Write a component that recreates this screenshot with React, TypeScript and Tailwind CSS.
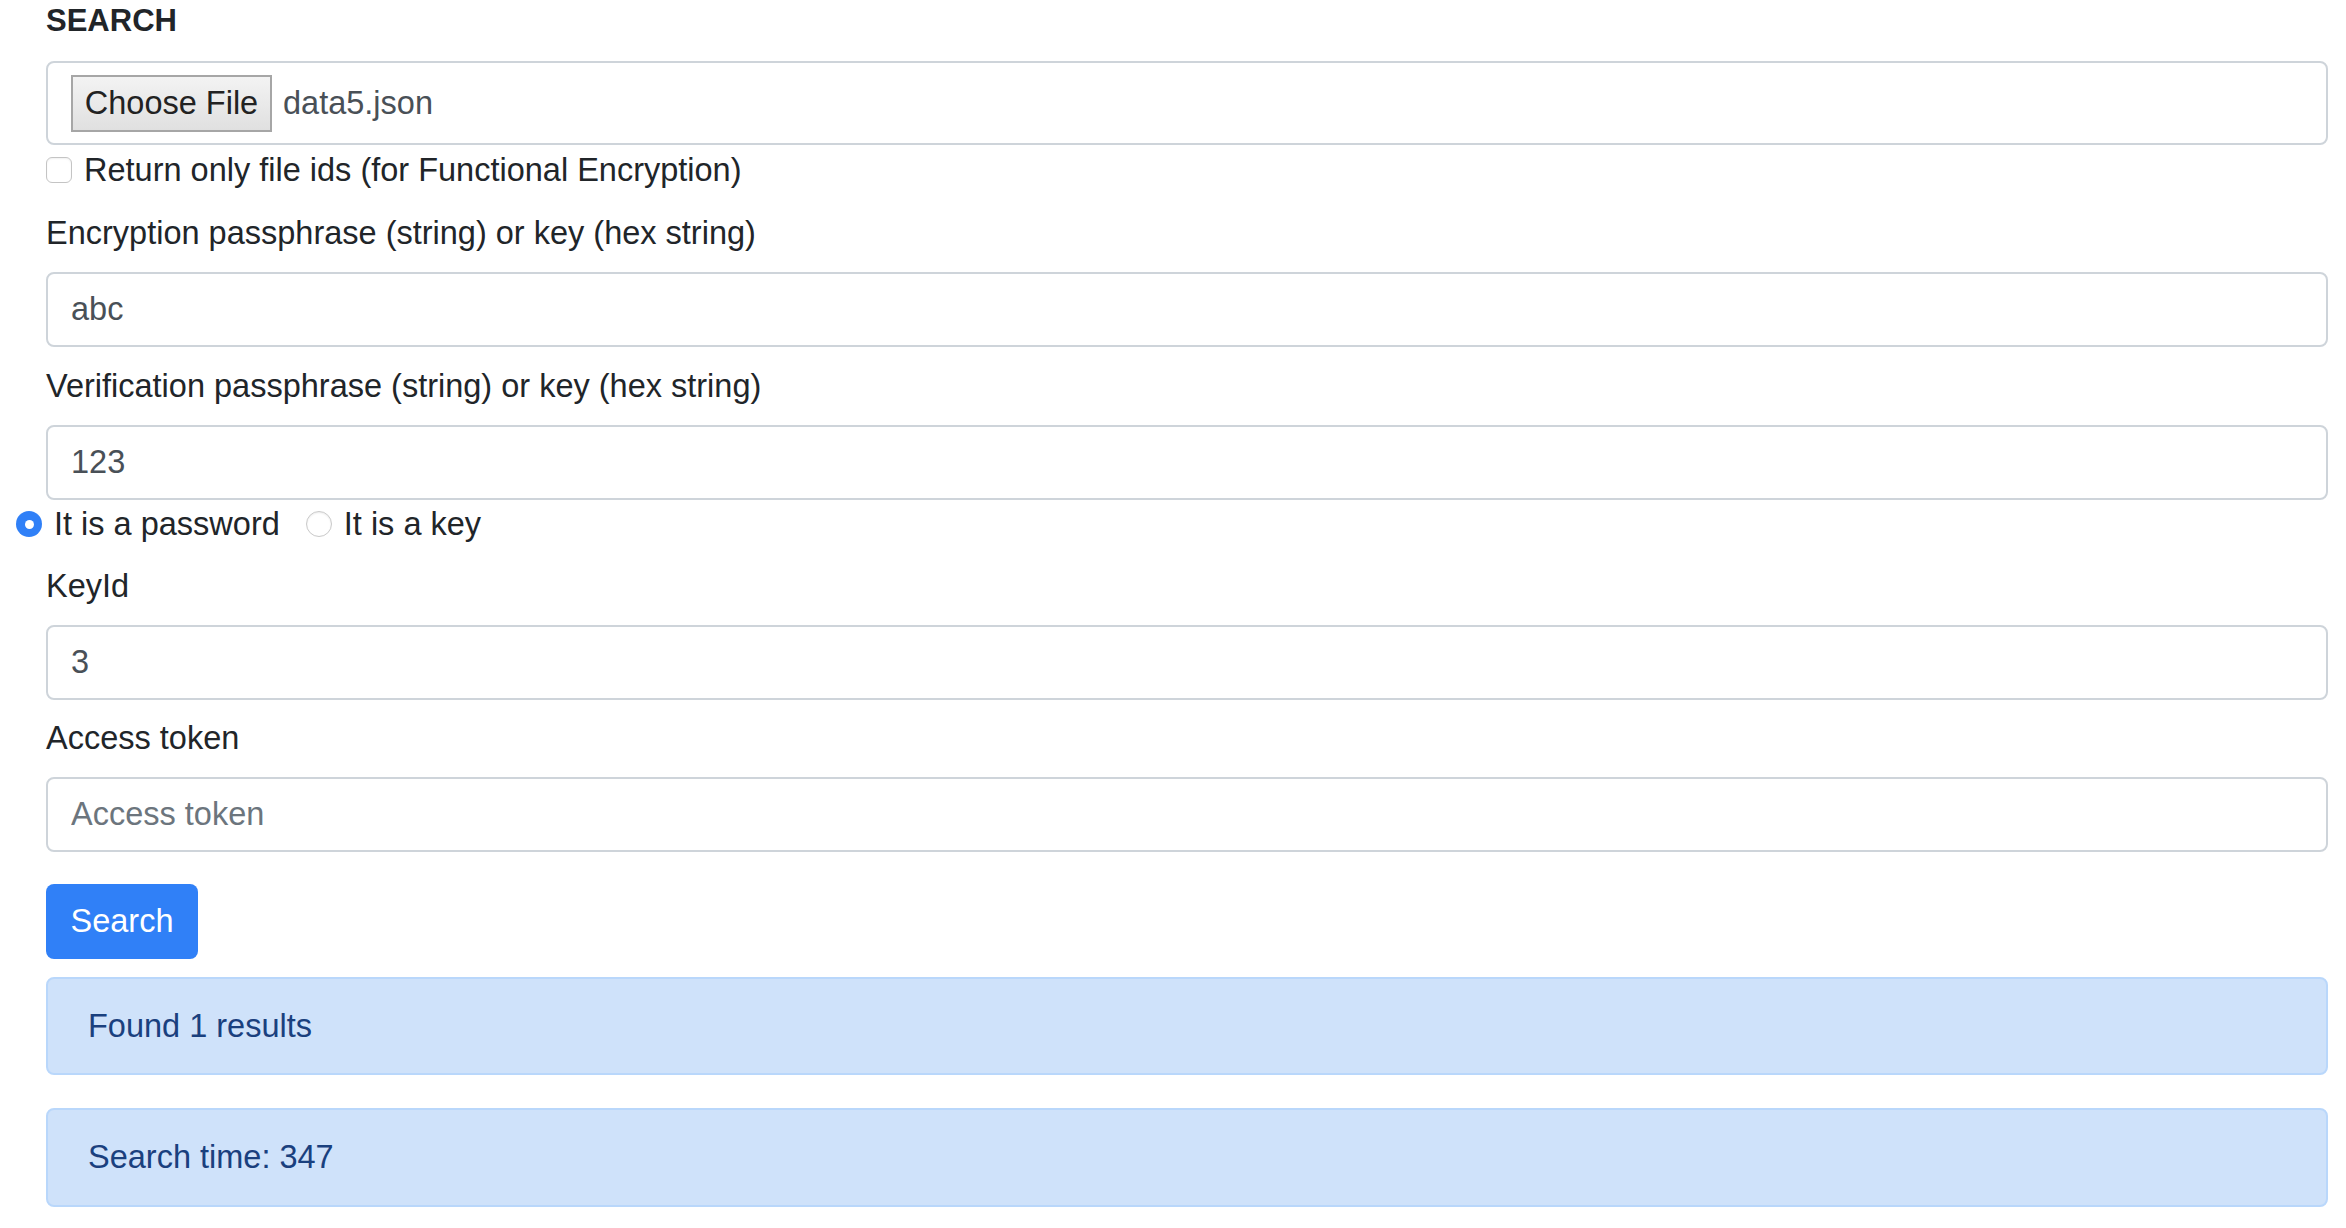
import React, { useState } from 'react';

const font = { fontFamily: '"Liberation Sans", Arial, sans-serif' };

function Field({ label, value, placeholder }: { label: string; value?: string; placeholder?: string }) {
  return (
    <div>
      <label className="block mt-[15px] h-[48px] leading-[48px] text-[32.5px] text-[#212529]">{label}</label>
      <input
        type="text"
        readOnly
        value={value ?? ''}
        placeholder={placeholder}
        className="mt-[15px] block w-full h-[75px] px-[23px] border-2 border-[#ced4da] rounded-[8px] bg-white text-[32.5px] text-[#495057] placeholder:text-[#6c757d] outline-none"
      />
    </div>
  );
}

function Radio({ checked, label, onClick }: { checked: boolean; label: string; onClick: () => void }) {
  return (
    <button type="button" onClick={onClick} className="flex items-center gap-[12px] text-[32.5px] text-[#212529]">
      {checked ? (
        <span className="flex items-center justify-center w-[26px] h-[26px] rounded-full bg-[#3080f7]">
          <span className="w-[9px] h-[9px] rounded-full bg-white" />
        </span>
      ) : (
        <span className="w-[26px] h-[26px] rounded-full border border-[#c9c9c9] bg-white shadow-[inset_0_1px_2px_rgba(0,0,0,0.08)]" />
      )}
      <span>{label}</span>
    </button>
  );
}

export default function App() {
  const [idsOnly, setIdsOnly] = useState(false);
  const [isPassword, setIsPassword] = useState(true);

  return (
    <div style={font} className="min-h-screen bg-white pl-[46px] pr-[18px] pb-[20px]">
      <h5 className="mt-[2px] h-[38px] leading-[38px] text-[31px] font-bold text-[#212529]">SEARCH</h5>

      {/* file picker */}
      <div className="mt-[21px] flex items-center h-[84px] px-[23px] border-2 border-[#ced4da] rounded-[8px]">
        <span className="flex items-center justify-center w-[201px] h-[57px] border-2 border-[#a6a6a6] bg-gradient-to-b from-[#f3f3f3] to-[#e0e0e0] text-[32.5px] text-[#222]">
          Choose File
        </span>
        <span className="ml-[11px] text-[32.5px] text-[#495057]">data5.json</span>
      </div>

      <div className="mt-[1px] flex items-center h-[48px] text-[32.5px] text-[#212529]">
        <button
          type="button"
          onClick={() => setIdsOnly(!idsOnly)}
          className={
            idsOnly
              ? 'w-[26px] h-[26px] rounded-[6px] bg-[#3080f7] text-white text-[20px] leading-none'
              : 'w-[26px] h-[26px] rounded-[6px] border border-[#c4c4c4] bg-white shadow-[inset_0_1px_2px_rgba(0,0,0,0.06)]'
          }
        >
          {idsOnly ? '✓' : ''}
        </button>
        <span className="ml-[12px]">Return only file ids (for Functional Encryption)</span>
      </div>

      <Field label="Encryption passphrase (string) or key (hex string)" value="abc" />
      <Field label="Verification passphrase (string) or key (hex string)" value="123" />

      <div className="-ml-[30px] flex items-center gap-[26px] h-[48px]">
        <Radio checked={isPassword} label="It is a password" onClick={() => setIsPassword(true)} />
        <Radio checked={!isPassword} label="It is a key" onClick={() => setIsPassword(false)} />
      </div>

      <div className="-mt-[1px]">
        <Field label="KeyId" value="3" />
      </div>
      <div className="-mt-[1px]">
        <Field label="Access token" placeholder="Access token" />
      </div>

      <button
        type="button"
        className="mt-[32px] block w-[152px] h-[75px] rounded-[8px] bg-[#3080f7] text-white text-[32.5px]"
      >
        Search
      </button>

      <div className="mt-[18px] h-[98px] flex items-center px-[40px] border-2 border-[#b9d7fb] bg-[#cfe2fa] rounded-[8px] text-[32.5px] text-[#1a407e]">
        Found 1 results
      </div>
      <div className="mt-[33px] h-[99px] flex items-center px-[40px] border-2 border-[#b9d7fb] bg-[#cfe2fa] rounded-[8px] text-[32.5px] text-[#1a407e]">
        Search time: 347
      </div>
    </div>
  );
}
